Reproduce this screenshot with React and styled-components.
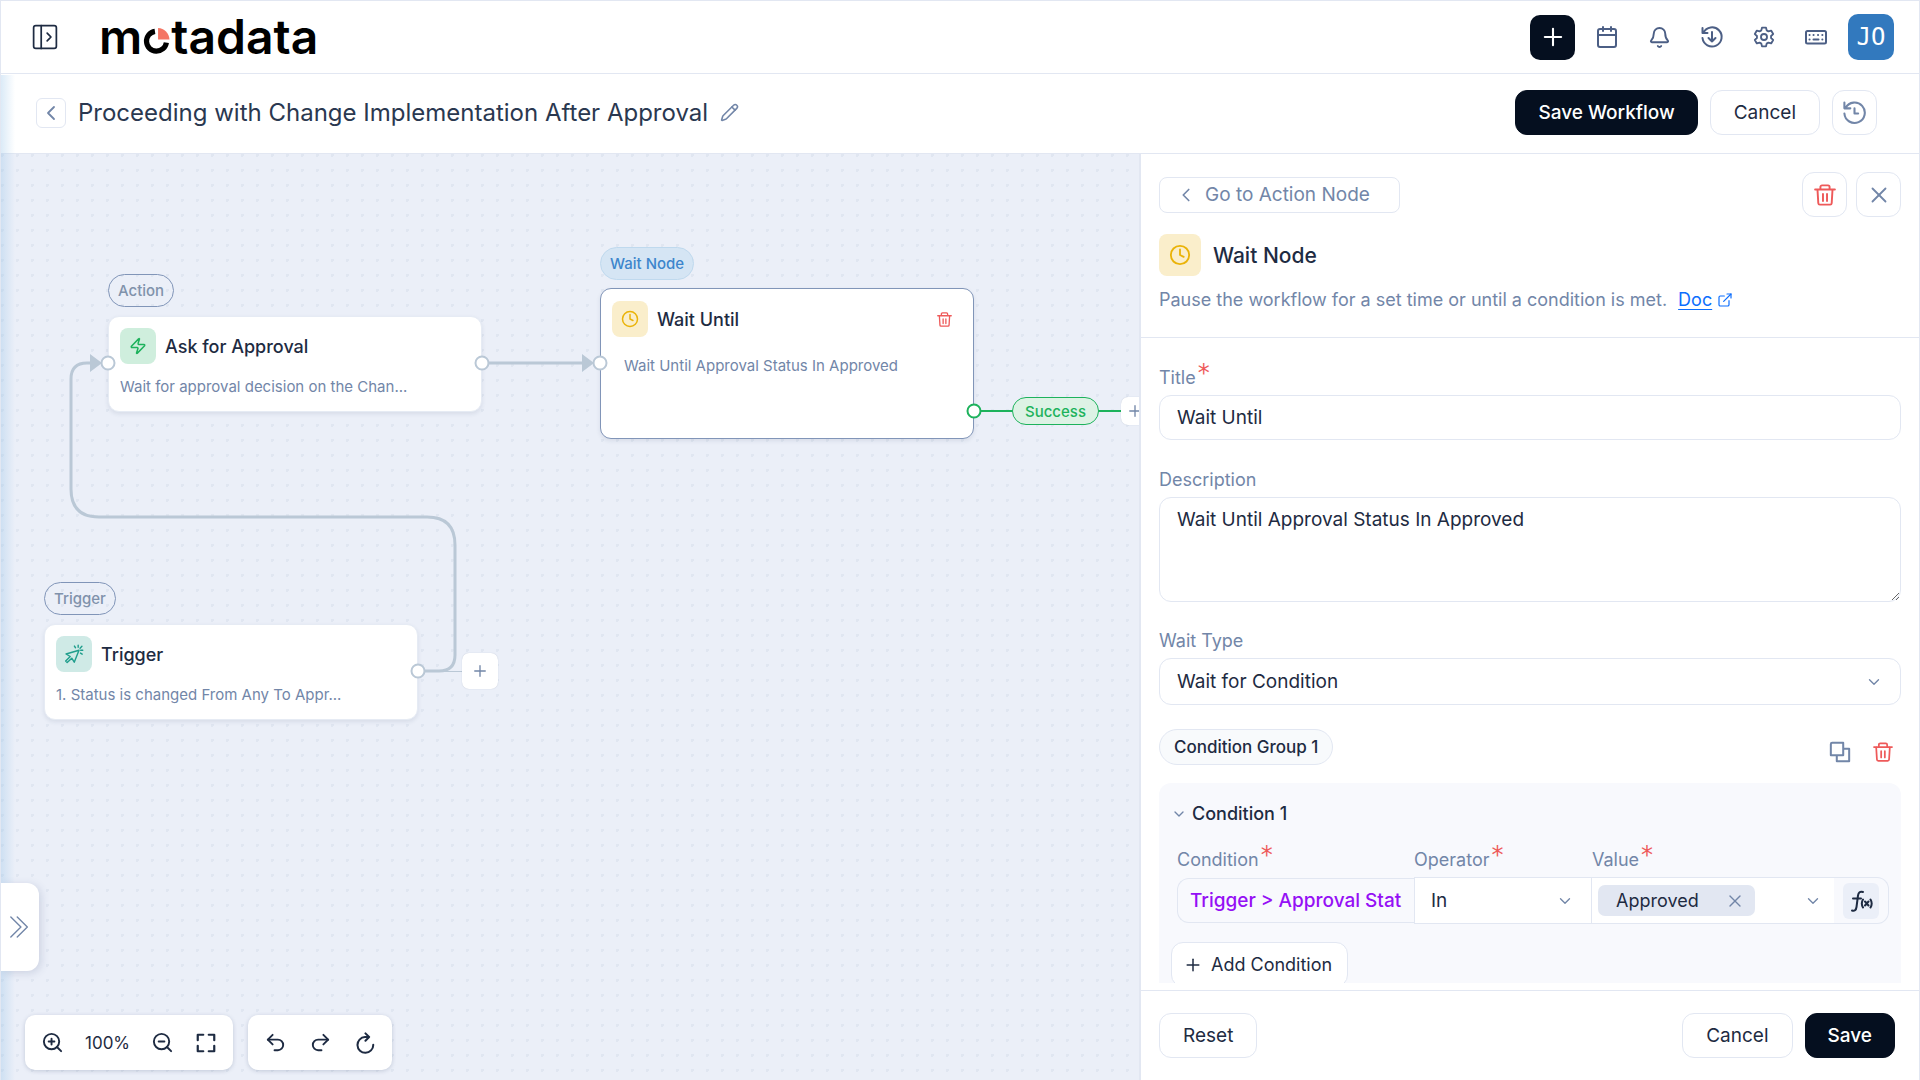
import React, { useState } from "react";
import styled, { createGlobalStyle, css } from "styled-components";
import {
  Calendar,
  Bell,
  Plus,
  ChevronLeft,
  ChevronDown,
  X,
  ZoomIn,
  ZoomOut,
  Undo2,
  Redo2,
  Zap,
  Clock,
  ExternalLink,
  Pencil,
} from "lucide-react";

const colors = {
  ink: "#1e2b42",
  title: "#2a3850",
  muted: "#7286a8",
  icon: "#4c5f85",
  line: "#e2e7f2",
  edge: "#bac8d6",
  red: "#ee5a5a",
  green: "#1db25c",
  dark: "#050f1f",
  canvas: "#ebeff8",
};

const GlobalStyle = createGlobalStyle`
  * {
    box-sizing: border-box;
  }

  html, body, #root {
    height: 100%;
  }

  body {
    margin: 0;
    background: #fff;
    color: ${colors.ink};
    font-family: Inter, "Liberation Sans", sans-serif;
    font-size: 18px;
  }

  button, input, textarea, select {
    font: inherit;
    color: inherit;
  }

  button {
    padding: 0;
    cursor: pointer;
  }

  svg {
    display: block;
    flex: none;
  }
`;

const Page = styled.div`
  display: flex;
  flex-direction: column;
  height: 100vh;
  overflow: hidden;
  border: 1px solid ${colors.line};
  border-bottom: 0;
`;

/* ---------- header ---------- */

const Header = styled.header`
  display: flex;
  align-items: center;
  justify-content: space-between;
  height: 73px;
  flex: none;
  padding: 0 25px 0 31px;
  border-bottom: 1px solid ${colors.line};
`;

const Brand = styled.div`
  display: flex;
  align-items: center;
  gap: 41px;
`;

const PlainButton = styled.button`
  display: flex;
  align-items: center;
  justify-content: center;
  border: 0;
  background: none;
  color: ${(props) => props.$color || colors.icon};
`;

const Logo = styled.div`
  display: flex;
  align-items: baseline;
  color: #000;
  font-size: 48px;
  font-weight: 600;
  line-height: 56px;

  svg {
    margin: 0 1px;
  }
`;

const HeaderActions = styled.div`
  display: flex;
  align-items: center;
  gap: 20px;
`;

const HeaderIcons = styled.nav`
  display: flex;
  align-items: center;
  gap: 29px;
`;

const AddButton = styled(PlainButton)`
  width: 45px;
  height: 45px;
  border-radius: 10px;
  background: ${colors.dark};
  color: #fff;
`;

const Avatar = styled.button`
  width: 46px;
  height: 46px;
  border: 0;
  border-radius: 10px;
  background: #3279be;
  color: #fff;
  font-family: "DejaVu Sans Mono", monospace;
  font-size: 24px;
`;

/* ---------- title bar ---------- */

const Main = styled.main`
  position: relative;
  display: flex;
  flex-direction: column;
  flex: 1;
  min-height: 0;
`;

const EdgeGlow = styled.div`
  position: absolute;
  z-index: 2;
  inset: 1px auto 0 0;
  width: 14px;
  background: linear-gradient(
    to right,
    rgba(150, 195, 232, 0.34),
    rgba(150, 195, 232, 0)
  );
  pointer-events: none;
`;

const TitleBar = styled.div`
  display: flex;
  align-items: center;
  justify-content: space-between;
  height: 80px;
  flex: none;
  padding: 0 42px 2px 35px;
  border-bottom: 1px solid ${colors.line};
`;

const TitleGroup = styled.div`
  display: flex;
  align-items: center;
  gap: 12px;
`;

const Title = styled.h1`
  margin: 0;
  color: ${colors.title};
  font-size: 24px;
  font-weight: 400;
  line-height: 32px;
`;

const ButtonRow = styled.div`
  display: flex;
  align-items: center;
  gap: ${(props) => props.$gap || 12}px;
`;

const Button = styled.button`
  height: 45px;
  padding: 0 23px;
  border: 1px solid ${colors.line};
  border-radius: 12px;
  background: #fff;
  font-size: 19px;

  ${(props) =>
    props.$primary &&
    css`
      padding: 0 22px;
      border-color: ${colors.dark};
      background: ${colors.dark};
      color: #fff;
      font-weight: 500;
    `}
`;

const SquareButton = styled(PlainButton)`
  width: ${(props) => props.$size || 45}px;
  height: ${(props) => props.$size || 45}px;
  border: 1px solid ${colors.line};
  border-radius: ${(props) => (props.$size ? 6 : 12)}px;
  background: #fff;
  color: ${(props) => props.$color || colors.muted};
`;

const Workspace = styled.div`
  display: flex;
  flex: 1;
  min-height: 0;
`;

/* ---------- canvas ---------- */

const Canvas = styled.section`
  position: relative;
  flex: 1;
  min-width: 0;
  overflow: hidden;
  background-color: ${colors.canvas};
  background-image: radial-gradient(
    circle at 1px 1px,
    #e0e6f1 2px,
    transparent 2px
  );
  background-size: 15px 15px;
`;

const Edges = styled.svg`
  position: absolute;
  top: 0;
  left: 0;
  width: 100%;
  height: 100%;
  pointer-events: none;
`;

const NodeTag = styled.span`
  position: absolute;
  display: flex;
  align-items: center;
  height: 33px;
  padding: 0 9px;
  border: 1px solid ${(props) => (props.$active ? "#bfd9ee" : "#8195b8")};
  border-radius: 17px;
  background: ${(props) => (props.$active ? "#d5e5f4" : "transparent")};
  color: ${(props) => (props.$active ? "#3d86cc" : "#8092ab")};
  font-size: 15px;
  font-weight: 500;
`;

const NodeCard = styled.article`
  position: absolute;
  width: 374px;
  min-height: ${(props) => (props.$selected ? 151 : 96)}px;
  padding: ${(props) => (props.$selected ? "12px 21px 12px 11px" : "11px")};
  border: 1px solid ${(props) => (props.$selected ? "#8195b8" : "#e6ebf4")};
  border-radius: 11px;
  background: #fff;
  box-shadow: 0 2px 4px rgba(40, 60, 100, 0.1);
`;

const NodeHead = styled.div`
  display: flex;
  align-items: center;
  gap: 9px;
`;

const NodeIcon = styled.span`
  display: flex;
  align-items: center;
  justify-content: center;
  width: ${(props) => props.$size || 36}px;
  height: ${(props) => props.$size || 36}px;
  border-radius: 8px;
  background: ${(props) => props.$bg};
  color: ${(props) => props.$color};
`;

const NodeTitle = styled.h2`
  flex: 1;
  margin: 0;
  font-size: 18px;
  font-weight: 500;
`;

const NodeText = styled.p`
  width: 300px;
  margin: ${(props) => (props.$selected ? "19px 0 0 12px" : "13px 0 0")};
  overflow: hidden;
  color: ${colors.muted};
  font-size: 15px;
  line-height: 20px;
  white-space: nowrap;
`;

const AddNode = styled(PlainButton)`
  position: absolute;
  width: ${(props) => props.$size}px;
  height: ${(props) => props.$size}px;
  border-radius: 7px;
  background: #fff;
  color: ${colors.muted};
  box-shadow: 0 0 1px rgba(60, 80, 120, 0.3);
`;

const Branch = styled.span`
  position: absolute;
  display: flex;
  align-items: center;
  height: 28px;
  padding: 0 12px;
  border: 1px solid ${colors.green};
  border-radius: 14px;
  background: #ddf2e5;
  color: ${colors.green};
  font-size: 15px;
  font-weight: 500;
`;

const Drawer = styled(PlainButton)`
  position: absolute;
  z-index: 3;
  bottom: 109px;
  left: 0;
  width: 38px;
  height: 88px;
  border-radius: 0 12px 12px 0;
  background: #fff;
  color: ${colors.muted};
  box-shadow: 2px 2px 8px rgba(60, 80, 130, 0.18);
`;

const Toolbars = styled.div`
  position: absolute;
  bottom: 10px;
  left: 24px;
  display: flex;
  gap: 15px;
`;

const Toolbar = styled.div`
  display: flex;
  align-items: center;
  gap: ${(props) => props.$gap}px;
  height: 55px;
  padding: 0 16px;
  border-radius: 10px;
  background: #fff;
  box-shadow: 0 1px 4px rgba(50, 70, 110, 0.22);
  font-size: 17px;
`;

/* ---------- side panel ---------- */

const Panel = styled.aside`
  display: flex;
  flex-direction: column;
  width: 41%;
  max-width: 780px;
  border-left: 2px solid ${colors.line};
  background: #fff;
`;

const PanelHead = styled.div`
  padding: 18px 18px 25px;
  border-bottom: 1px solid ${colors.line};
`;

const PanelBar = styled.div`
  display: flex;
  align-items: center;
  justify-content: space-between;
`;

const BackLink = styled(PlainButton)`
  gap: 8px;
  height: 36px;
  padding: 0 29px 0 15px;
  border: 1px solid ${colors.line};
  border-radius: 8px;
  color: ${colors.muted};
  font-size: 19px;
`;

const PanelTitle = styled.div`
  display: flex;
  align-items: center;
  gap: 12px;
  margin-top: 17px;

  h2 {
    margin: 0;
    font-size: 21px;
    font-weight: 500;
  }
`;

const PanelHint = styled.p`
  display: flex;
  align-items: center;
  margin: 12px 0 0;
  color: ${colors.muted};
  font-size: 18px;
  line-height: 24px;

  a {
    display: flex;
    align-items: center;
    gap: 5px;
    margin-left: 11px;
    color: #0d6efd;
    text-underline-offset: 3px;
  }
`;

const PanelBody = styled.form`
  flex: 1;
  min-height: 0;
  margin-bottom: 7px;
  padding: 27px 18px 0;
  overflow: hidden;
`;

const Label = styled.label`
  display: flex;
  height: 30px;
  padding-top: 1px;
  color: ${colors.muted};
  font-size: 18px;
  line-height: 24px;
`;

const Star = styled.span`
  margin-left: 2px;
  color: ${colors.red};
  font-family: "DejaVu Sans", sans-serif;
  font-size: 24px;
  line-height: 14px;
`;

const fieldBase = css`
  display: block;
  width: 100%;
  border: 1px solid ${colors.line};
  border-radius: 12px;
  outline: none;
  background: #fff;
  font-size: 19px;
`;

const TextInput = styled.input`
  ${fieldBase}
  height: 45px;
  padding: 0 17px;
`;

const TextArea = styled.textarea`
  ${fieldBase}
  height: 105px;
  padding: 9px 17px;
  line-height: 26px;
  resize: vertical;
`;

const Field = styled.div`
  margin-bottom: ${(props) => props.$gap || 27}px;
`;

const SelectWrap = styled.div`
  position: relative;
  display: flex;
  align-items: center;

  > svg {
    position: absolute;
    right: 18px;
    color: ${colors.muted};
    pointer-events: none;
  }
`;

const Select = styled.select`
  ${fieldBase}
  height: 47px;
  padding: 0 17px;
  appearance: none;
`;

const GroupHead = styled.div`
  display: flex;
  align-items: flex-start;
  justify-content: space-between;
  padding-right: 8px;
`;

const GroupTag = styled.span`
  display: flex;
  align-items: center;
  height: 36px;
  padding: 0 14px;
  border: 1px solid ${colors.line};
  border-radius: 18px;
  background: #f8fafc;
  font-size: 17px;
  font-weight: 500;
`;

const GroupTools = styled.div`
  display: flex;
  gap: 22px;
  padding-top: 12px;
`;

const Group = styled.div`
  height: 240px;
  margin-top: 18px;
  padding: 19px 12px;
  border-radius: 12px;
  background: #f8f9fd;
`;

const GroupToggle = styled(PlainButton)`
  gap: 5px;
  color: ${colors.ink};
  font-size: 18px;
  font-weight: 500;
  line-height: 24px;

  svg {
    color: ${colors.muted};
  }
`;

const ConditionGrid = styled.div`
  display: grid;
  grid-template-columns: 237fr 178fr 297fr;
  margin-top: 21px;
  padding-left: 6px;
`;

const ConditionInput = styled.input`
  ${fieldBase}
  height: 45px;
  margin-top: 1px;
  padding: 0 12px;
  border-right: 0;
  border-radius: 12px 0 0 12px;
  background: transparent;
  color: #9510f5;
  font-weight: 500;
`;

const OperatorSelect = styled(Select)`
  border-radius: 0;
  padding: 0 16px;
`;

const ValueBox = styled.div`
  display: flex;
  align-items: center;
  height: 47px;
  border: 1px solid ${colors.line};
  border-left: 0;
  border-radius: 0 12px 12px 0;
`;

const ValueField = styled.div`
  display: flex;
  flex: 1;
  align-items: center;
  justify-content: space-between;
  height: 45px;
  padding: 0 12px 0 6px;
  background: #fff;
  color: ${colors.muted};
`;

const Chip = styled.span`
  display: flex;
  align-items: center;
  gap: 26px;
  height: 31px;
  padding: 0 10px 0 18px;
  border-radius: 7px;
  background: #e2e7f2;
  color: ${colors.ink};
  font-size: 18px;
`;

const FxButton = styled(PlainButton)`
  width: 36px;
  height: 36px;
  margin: 0 9px;
  border-radius: 6px;
  background: ${colors.canvas};
  color: ${colors.ink};
`;

const AddCondition = styled(Button)`
  display: flex;
  align-items: center;
  gap: 8px;
  margin-top: 18px;
  padding: 0 15px 0 11px;
  font-size: 18px;
`;

const PanelFoot = styled.footer`
  display: flex;
  align-items: center;
  justify-content: space-between;
  height: 90px;
  flex: none;
  padding: 0 24px 0 18px;
  border-top: 1px solid ${colors.line};
`;

/* ---------- icons ---------- */

const Icon = ({ size = 20, stroke = 2, children }) => (
  <svg
    width={size}
    height={size}
    viewBox="0 0 24 24"
    fill="none"
    stroke="currentColor"
    strokeWidth={stroke}
    strokeLinecap="round"
    strokeLinejoin="round"
    aria-hidden="true">
    {children}
  </svg>
);

const SidebarIcon = () => (
  <Icon size={26} stroke={1.6}>
    <rect x="1.5" y="1.5" width="21" height="21" rx="2" />
    <path d="M8.500 1.500v21M14 8.500l3.500 3.500-3.500 3.500" />
  </Icon>
);

const TrashIcon = ({ size }) => (
  <Icon size={size} stroke={2.1}>
    <path d="M1.200 6h21.600M7 6V3.200A1.700 1.700 0 0 1 8.700 1.500h6.600A1.700 1.700 0 0 1 17 3.200V6M3.800 6l.9 15a1.600 1.600 0 0 0 1.600 1.500h11.400a1.600 1.600 0 0 0 1.600-1.500l.9-15" />
    <path d="M9.800 11v7.500M14.200 11v7.500" />
  </Icon>
);

const RestoreIcon = () => (
  <Icon size={24} stroke={2}>
    <path d="M3.500 7.500A9.600 9.600 0 1 1 2.500 13M2.500 3v5h5M12 7v9.500M8.500 13l3.500 3.500 3.500-3.500" />
  </Icon>
);

const HistoryIcon = () => (
  <Icon size={25} stroke={2}>
    <path d="M3.500 7.500A9.800 9.800 0 1 1 2.300 13M2.300 2.500v5.500h5.700M12 8v5h3.500" />
  </Icon>
);

const GearIcon = () => (
  <Icon size={22} stroke={2}>
    <circle cx="12" cy="12" r="3.3" />
    <path d="M9.800 1.800h4.400l.7 3 1.900 1.100 3-.9 2.200 3.800-2.300 2.100v2.200l2.300 2.100-2.200 3.800-3-.9-1.900 1.100-.7 3H9.800l-.7-3-1.900-1.100-3 .9L2 15.200l2.300-2.100v-2.200L2 8.800 4.200 5l3 .9 1.900-1.100z" />
  </Icon>
);

const KeyboardIcon = () => (
  <Icon size={24} stroke={2}>
    <rect x="2" y="6" width="20" height="12.500" rx="1.500" />
    <path
      d="M5.500 10h.1M9.500 10h.1M14 10h.1M18.300 10h.1M5.500 14.500h.1M9.500 14.500h5M18.300 14.500h.1"
      strokeWidth="2"
    />
  </Icon>
);

const CornersIcon = () => (
  <Icon size={22} stroke={2.4}>
    <path d="M3 9V3h6M15 3h6v6M21 15v6h-6M9 21H3v-6" />
  </Icon>
);

const ReloadIcon = () => (
  <Icon size={22} stroke={2.2}>
    <path d="M16 5.500h-4A8.600 8.600 0 1 0 21 14M12.500 1.500l4 4-4 4" />
  </Icon>
);

const CopyIcon = () => (
  <Icon size={22} stroke={2.2}>
    <path d="M15.500 2h-12A1.500 1.500 0 0 0 2 3.500v12h13.500zM8.500 15.500V22H22V8.500h-6.500" />
  </Icon>
);

const DoubleChevron = () => (
  <Icon size={22} stroke={1.5}>
    <path d="M2 1l11 11L2 23M9 1l11 11L9 23" />
  </Icon>
);

const LaunchIcon = () => (
  <Icon size={20} stroke={1.7}>
    <path d="M18 7.500L2.500 12l5 3-5.500 5.500 1.800 1.800L9.300 17l3 4.800zM17 1.500V4M22.500 7.500H20M12.500 2.500l1.300 2M21.800 12.200l-2-1.300M21.500 2.800l-2.200 2.200" />
  </Icon>
);

const FxIcon = () => (
  <Icon size={24} stroke={2}>
    <path d="M14 3c-3-1-4.500.5-5 3.500L7.500 18c-.4 3-2 4.500-4.500 3.500M4 9.500h8" />
    <path d="M14 10.500c-1.500 2.500-1.500 5.500 0 8M21.500 10.500c1.500 2.500 1.500 5.500 0 8M16 12.500l3.500 4M19.500 12.500l-3.500 4" />
  </Icon>
);

const LogoMark = () => (
  <svg width="27" height="26" viewBox="0 0 26 25" aria-hidden="true">
    <path
      d="M11.500 3.200A9.600 9.600 0 1 0 22.500 14"
      fill="none"
      stroke="#000"
      strokeWidth="5"
    />
    <path d="M14.500 0A11.500 11.500 0 0 1 25.500 11h-11z" fill="#f47564" />
  </svg>
);

const nodes = [
  {
    id: "action",
    tag: "Action",
    title: "Ask for Approval",
    text: "Wait for approval decision on the Chan...",
    x: 107,
    y: 162,
    icon: <Zap size={18} />,
    bg: "#cfeedd",
    color: colors.green,
  },
  {
    id: "trigger",
    tag: "Trigger",
    title: "Trigger",
    text: "1. Status is changed From Any To Appr...",
    x: 43,
    y: 470,
    icon: <LaunchIcon />,
    bg: "#cfeae6",
    color: "#1f9e8c",
  },
  {
    id: "wait",
    tag: "Wait Node",
    title: "Wait Until",
    text: "Wait Until Approval Status In Approved",
    x: 599,
    y: 134,
    icon: <Clock size={18} />,
    bg: "#faeecb",
    color: "#eab308",
    selected: true,
  },
];

const handles = [
  { x: 107, y: 209, color: colors.edge },
  { x: 481, y: 209, color: colors.edge },
  { x: 417, y: 517, color: colors.edge },
  { x: 599, y: 209, color: colors.edge },
  { x: 973, y: 257, color: colors.green },
];

const FlowCanvas = () => (
  <Canvas>
    {nodes.map((node) => (
      <React.Fragment key={node.id}>
        <NodeTag
          $active={node.selected}
          style={{ left: node.x, top: node.y - (node.selected ? 41 : 42) }}>
          {node.tag}
        </NodeTag>
        <NodeCard
          $selected={node.selected}
          style={{ left: node.x, top: node.y }}>
          <NodeHead>
            <NodeIcon $bg={node.bg} $color={node.color}>
              {node.icon}
            </NodeIcon>
            <NodeTitle>{node.title}</NodeTitle>
            {node.selected && (
              <PlainButton $color={colors.red} aria-label="Delete node">
                <TrashIcon size={15} />
              </PlainButton>
            )}
          </NodeHead>
          <NodeText $selected={node.selected}>{node.text}</NodeText>
        </NodeCard>
      </React.Fragment>
    ))}

    <Edges>
      <g fill="none" stroke={colors.edge} strokeWidth="3">
        <path d="M417 517H438Q454 517 454 501V391Q454 363 426 363H98Q70 363 70 335V225Q70 209 86 209H92" />
        <path d="M481 209H584" />
        <path d="M440 517.500H462" strokeWidth="1" />
      </g>
      <g fill={colors.edge}>
        <path d="M89 200l12 9-12 9zM581 200l12 9-12 9z" />
      </g>
      <path d="M973 257H1120" stroke={colors.green} strokeWidth="2" />
      {handles.map((h) => (
        <circle
          key={`${h.x}-${h.y}`}
          cx={h.x}
          cy={h.y}
          r="6.5"
          fill="#fff"
          stroke={h.color}
          strokeWidth="2"
        />
      ))}
    </Edges>

    <AddNode $size={36} style={{ left: 461, top: 499 }} aria-label="Add node">
      <Plus size={18} strokeWidth={1.8} />
    </AddNode>
    <Branch style={{ left: 1011, top: 243 }}>Success</Branch>
    <AddNode $size={28} style={{ left: 1120, top: 243 }} aria-label="Add node">
      <Plus size={18} strokeWidth={1.8} />
    </AddNode>

    <Drawer aria-label="Open drawer">
      <DoubleChevron />
    </Drawer>

    <Toolbars>
      <Toolbar $gap={21}>
        <PlainButton $color={colors.ink} aria-label="Zoom in">
          <ZoomIn size={23} />
        </PlainButton>
        <span>100%</span>
        <PlainButton $color={colors.ink} aria-label="Zoom out">
          <ZoomOut size={23} />
        </PlainButton>
        <PlainButton $color={colors.ink} aria-label="Fit view">
          <CornersIcon />
        </PlainButton>
      </Toolbar>
      <Toolbar $gap={22}>
        <PlainButton $color={colors.ink} aria-label="Undo">
          <Undo2 size={23} />
        </PlainButton>
        <PlainButton $color={colors.ink} aria-label="Redo">
          <Redo2 size={23} />
        </PlainButton>
        <PlainButton $color={colors.ink} aria-label="Reset view">
          <ReloadIcon />
        </PlainButton>
      </Toolbar>
    </Toolbars>
  </Canvas>
);

const NodePanel = () => {
  const [title, setTitle] = useState("Wait Until");
  const [description, setDescription] = useState(
    "Wait Until Approval Status In Approved"
  );

  return (
    <Panel>
      <PanelHead>
        <PanelBar>
          <BackLink>
            <ChevronLeft size={22} strokeWidth={1.8} />
            Go to Action Node
          </BackLink>
          <ButtonRow $gap={9}>
            <SquareButton $color={colors.red} aria-label="Delete">
              <TrashIcon size={22} />
            </SquareButton>
            <SquareButton aria-label="Close">
              <X size={26} strokeWidth={1.7} />
            </SquareButton>
          </ButtonRow>
        </PanelBar>
        <PanelTitle>
          <NodeIcon $size={42} $bg="#faeecb" $color="#eab308">
            <Clock size={22} />
          </NodeIcon>
          <h2>Wait Node</h2>
        </PanelTitle>
        <PanelHint>
          Pause the workflow for a set time or until a condition is met.
          <a href="#doc">
            Doc <ExternalLink size={16} strokeWidth={1.8} />
          </a>
        </PanelHint>
      </PanelHead>

      <PanelBody>
        <Field>
          <Label htmlFor="title">
            Title<Star>*</Star>
          </Label>
          <TextInput
            id="title"
            value={title}
            onChange={(e) => setTitle(e.target.value)}
          />
        </Field>
        <Field $gap={26}>
          <Label htmlFor="description">Description</Label>
          <TextArea
            id="description"
            value={description}
            onChange={(e) => setDescription(e.target.value)}
          />
        </Field>
        <Field $gap={24}>
          <Label htmlFor="waitType">Wait Type</Label>
          <SelectWrap>
            <Select id="waitType">
              <option>Wait for Condition</option>
            </Select>
            <ChevronDown size={18} strokeWidth={1.8} />
          </SelectWrap>
        </Field>

        <GroupHead>
          <GroupTag>Condition Group 1</GroupTag>
          <GroupTools>
            <PlainButton type="button" $color={colors.muted} aria-label="Copy">
              <CopyIcon />
            </PlainButton>
            <PlainButton type="button" $color={colors.red} aria-label="Delete">
              <TrashIcon size={20} />
            </PlainButton>
          </GroupTools>
        </GroupHead>

        <Group>
          <GroupToggle type="button">
            <ChevronDown size={16} />
            Condition 1
          </GroupToggle>
          <ConditionGrid>
            <div>
              <Label htmlFor="condition">
                Condition<Star>*</Star>
              </Label>
              <ConditionInput
                id="condition"
                defaultValue="Trigger > Approval Status"
              />
            </div>
            <div>
              <Label htmlFor="operator">
                Operator<Star>*</Star>
              </Label>
              <SelectWrap>
                <OperatorSelect id="operator">
                  <option>In</option>
                </OperatorSelect>
                <ChevronDown size={18} strokeWidth={1.8} />
              </SelectWrap>
            </div>
            <div>
              <Label as="span">
                Value<Star>*</Star>
              </Label>
              <ValueBox>
                <ValueField>
                  <Chip>
                    Approved
                    <PlainButton
                      type="button"
                      $color={colors.muted}
                      aria-label="Remove Approved">
                      <X size={20} strokeWidth={1.6} />
                    </PlainButton>
                  </Chip>
                  <ChevronDown size={18} strokeWidth={1.8} />
                </ValueField>
                <FxButton type="button" aria-label="Function">
                  <FxIcon />
                </FxButton>
              </ValueBox>
            </div>
          </ConditionGrid>
          <AddCondition type="button">
            <Plus size={20} strokeWidth={1.8} />
            Add Condition
          </AddCondition>
        </Group>
      </PanelBody>

      <PanelFoot>
        <Button>Reset</Button>
        <ButtonRow>
          <Button>Cancel</Button>
          <Button $primary>Save</Button>
        </ButtonRow>
      </PanelFoot>
    </Panel>
  );
};

export default function App() {
  return (
    <Page>
      <GlobalStyle />
      <Header>
        <Brand>
          <PlainButton $color={colors.ink} aria-label="Open sidebar">
            <SidebarIcon />
          </PlainButton>
          <Logo>
            m<LogoMark />
            tadata
          </Logo>
        </Brand>
        <HeaderActions>
          <AddButton aria-label="Create">
            <Plus size={28} strokeWidth={1.8} />
          </AddButton>
          <HeaderIcons>
            <PlainButton aria-label="Calendar">
              <Calendar size={24} />
            </PlainButton>
            <PlainButton aria-label="Notifications">
              <Bell size={23} />
            </PlainButton>
            <PlainButton aria-label="Updates">
              <RestoreIcon />
            </PlainButton>
            <PlainButton aria-label="Settings">
              <GearIcon />
            </PlainButton>
            <PlainButton aria-label="Shortcuts">
              <KeyboardIcon />
            </PlainButton>
          </HeaderIcons>
          <Avatar>JO</Avatar>
        </HeaderActions>
      </Header>

      <Main>
        <EdgeGlow />
        <TitleBar>
          <TitleGroup>
            <SquareButton $size={30} aria-label="Back">
              <ChevronLeft size={24} strokeWidth={1.8} />
            </SquareButton>
            <Title>Proceeding with Change Implementation After Approval</Title>
            <PlainButton $color={colors.muted} aria-label="Rename">
              <Pencil size={19} />
            </PlainButton>
          </TitleGroup>
          <ButtonRow>
            <Button $primary>Save Workflow</Button>
            <Button>Cancel</Button>
            <SquareButton aria-label="History">
              <HistoryIcon />
            </SquareButton>
          </ButtonRow>
        </TitleBar>
        <Workspace>
          <FlowCanvas />
          <NodePanel />
        </Workspace>
      </Main>
    </Page>
  );
}
